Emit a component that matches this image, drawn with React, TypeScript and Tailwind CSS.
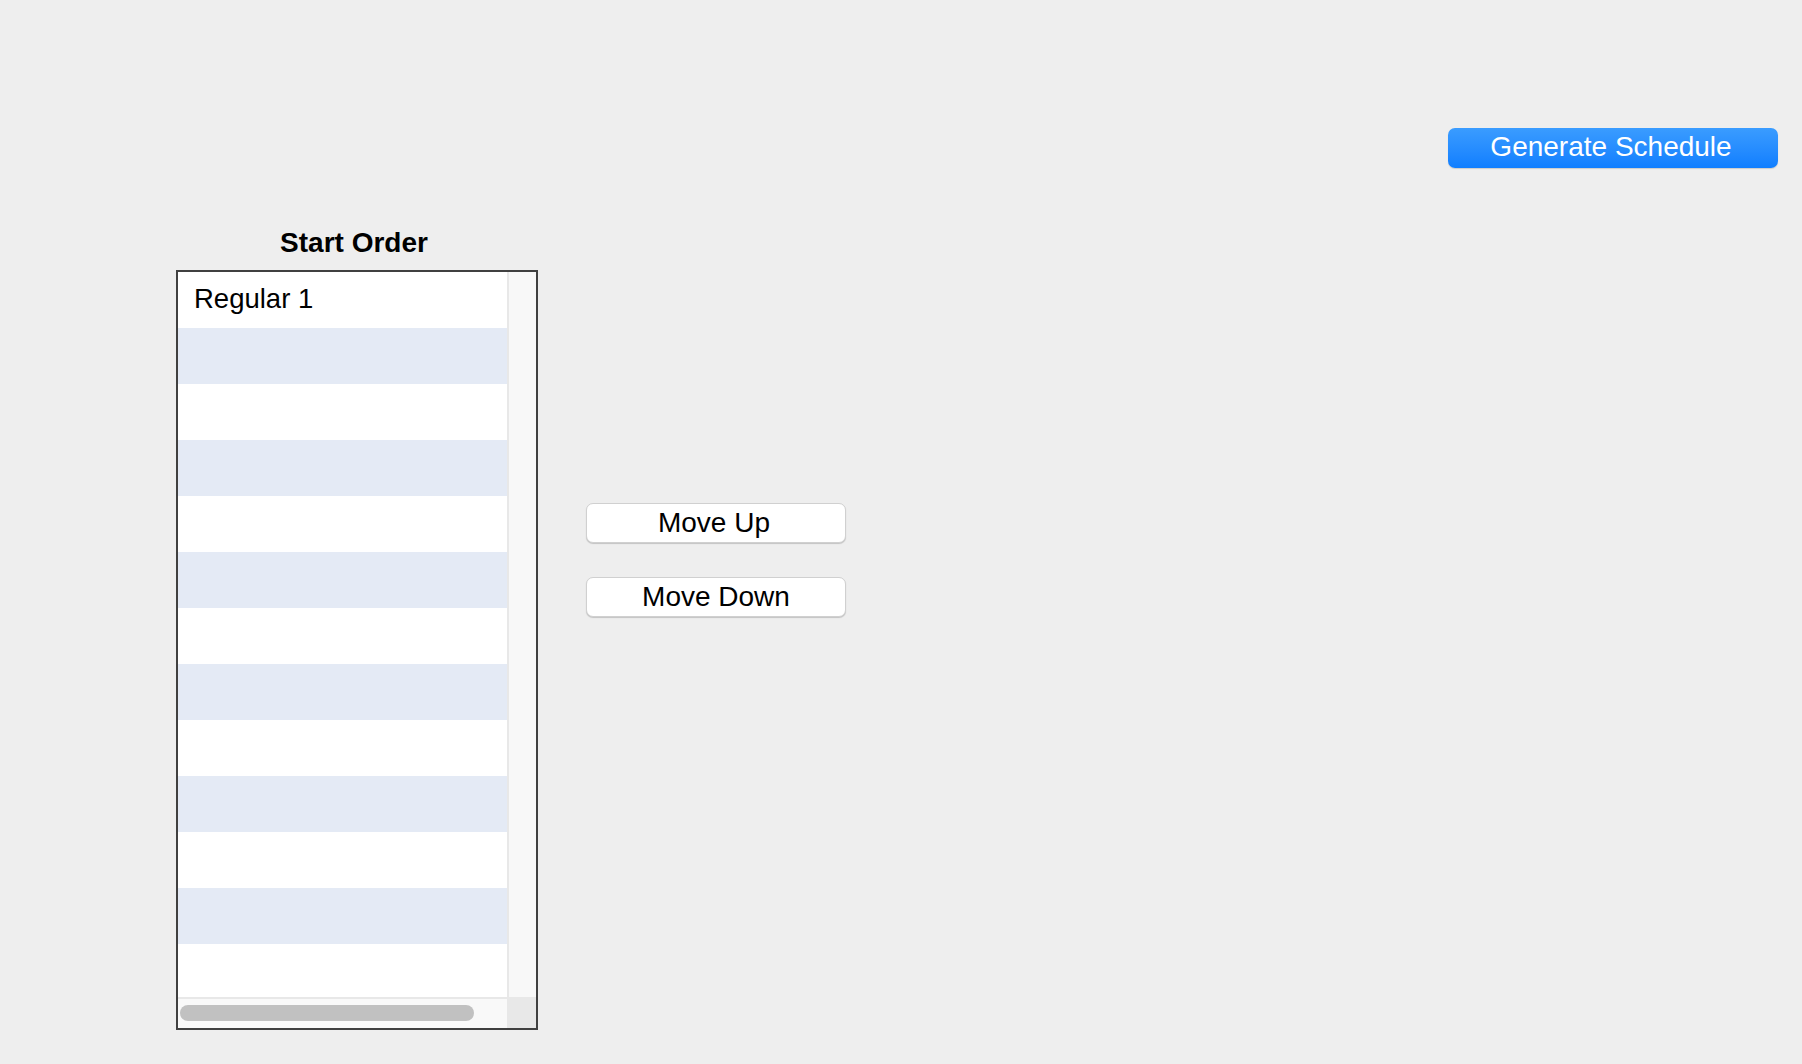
import React from "react";

const font = { fontFamily: '"Liberation Sans", Arial, Helvetica, sans-serif' };

export default function App() {
  const rows = Array.from({ length: 13 }, (_, i) => i);
  return (
    <div
      className="w-[1802px] h-[1064px] bg-[#eeeeee] overflow-hidden flex flex-col text-black"
      style={font}
    >
      <div className="flex justify-end pt-[128px] pr-[24px]">
        <button className="w-[330px] h-[40px] rounded-[7px] bg-gradient-to-b from-[#3a9cff] to-[#0f7eff] text-white text-[28px] leading-[40px] pb-[3px] pr-[4px] flex items-center justify-center shadow-[0_1px_1px_rgba(0,0,0,0.15)]">
          Generate Schedule
        </button>
      </div>

      <div className="flex flex-row ml-[176px] mt-[59px]">
        <div className="flex flex-col w-[362px]">
          <div className="h-[32px] leading-[32px] text-[28px] font-bold text-center pr-[6px]">
            Start Order
          </div>
          <div className="mt-[11px] w-[362px] h-[760px] border-2 border-[#404040] bg-white grid grid-cols-[1fr_29px] grid-rows-[725px_31px]">
            <div className="overflow-hidden flex flex-col">
              {rows.map((i) => (
                <div
                  key={i}
                  className={
                    i % 2 === 0
                      ? "h-[56px] shrink-0 bg-white flex items-center pl-[16px] pb-[3px] text-[27.5px]"
                      : "h-[56px] shrink-0 bg-[#e4eaf5] flex items-center pl-[16px] pb-[3px] text-[27.5px]"
                  }
                >
                  {i === 0 ? "Regular 1" : ""}
                </div>
              ))}
            </div>
            <div className="border-l-2 border-[#e8e8e8] bg-[#f8f8f8]" />
            <div className="border-t-2 border-[#e8e8e8] bg-[#f9f9f9] pt-[6px] pl-[2px]">
              <div className="w-[294px] h-[16px] rounded-full bg-[#c1c1c1]" />
            </div>
            <div className="bg-[#e8e8e8]" />
          </div>
        </div>

        <div className="flex flex-col ml-[48px] mt-[276px] gap-[34px]">
          <button className="w-[260px] h-[40px] rounded-[7px] bg-white border border-[#d0d0d0] shadow-[0_1px_1px_rgba(0,0,0,0.18)] text-[28px] pr-[4px] flex items-center justify-center">
            Move Up
          </button>
          <button className="w-[260px] h-[40px] rounded-[7px] bg-white border border-[#d0d0d0] shadow-[0_1px_1px_rgba(0,0,0,0.18)] text-[28px] flex items-center justify-center">
            Move Down
          </button>
        </div>
      </div>
    </div>
  );
}
